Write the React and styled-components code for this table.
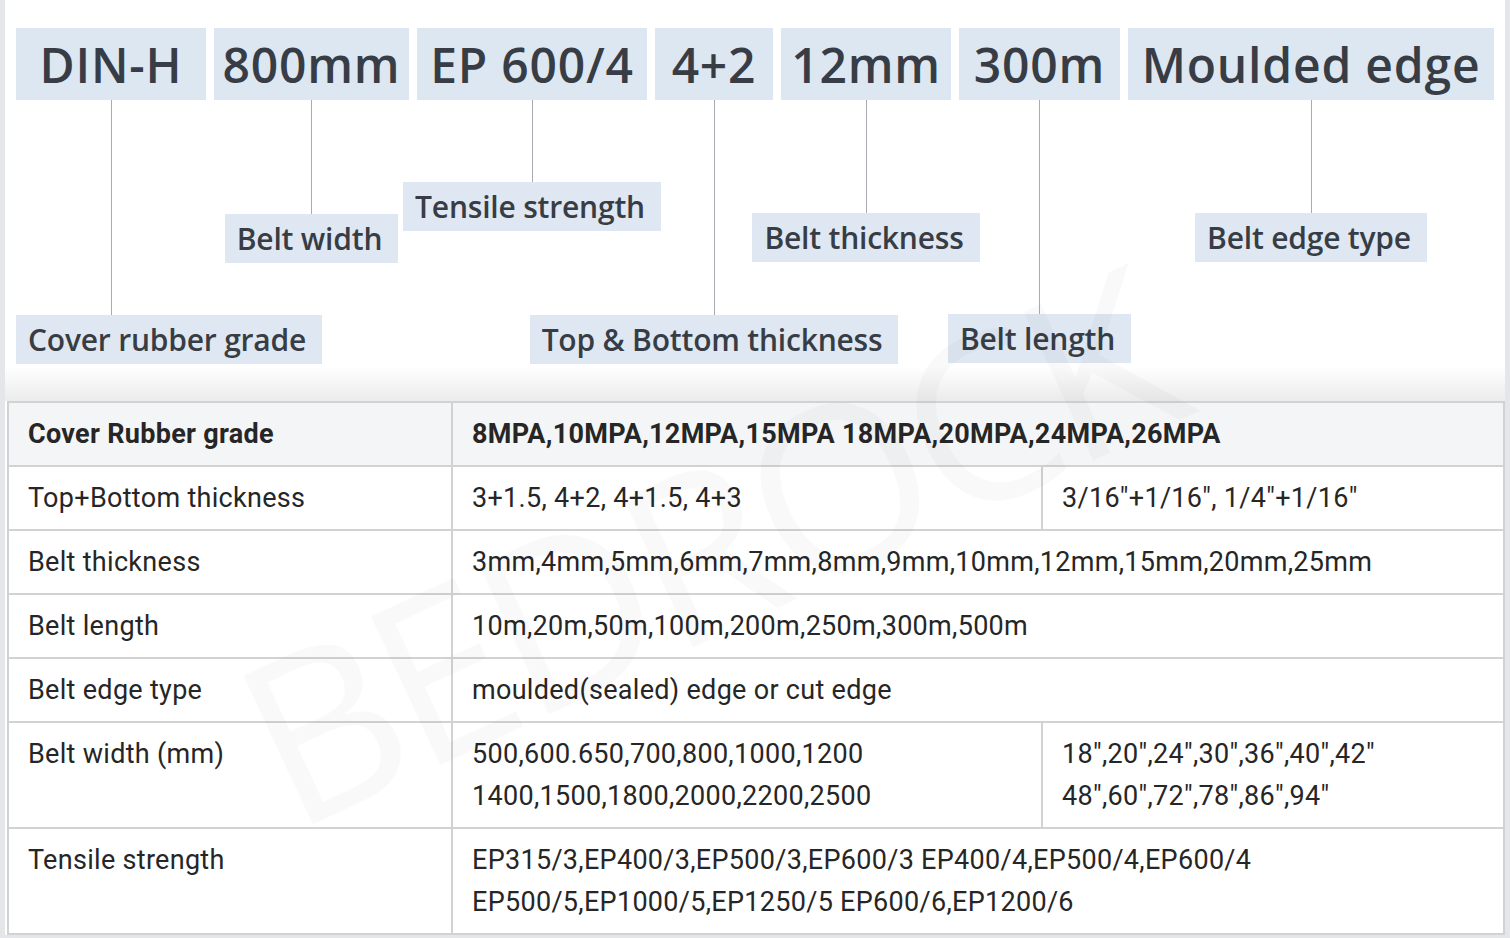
import React from "react";
import styled, { createGlobalStyle } from "styled-components";

const GlobalStyle = createGlobalStyle`
  body {
    margin: 0;
    background: #ffffff;
    font-family: "Open Sans", "Noto Sans", sans-serif;
  }
`;

const parts = [
  { code: "DIN-H", label: "Cover rubber grade", w: 190, drop: 215, start: true },
  { code: "800mm", label: "Belt width", w: 195, drop: 114 },
  { code: "EP 600/4", label: "Tensile strength", w: 230, drop: 82 },
  { code: "4+2", label: "Top & Bottom thickness", w: 118, drop: 215 },
  { code: "12mm", label: "Belt thickness", w: 170, drop: 113 },
  { code: "300m", label: "Belt length", w: 161, drop: 214 },
  { code: "Moulded edge", label: "Belt edge type", w: 366, drop: 113 },
];

const rows = [
  {
    name: "Top+Bottom thickness",
    values: ["3+1.5, 4+2, 4+1.5, 4+3", "3/16\"+1/16\", 1/4\"+1/16\""],
  },
  { name: "Belt thickness", values: ["3mm,4mm,5mm,6mm,7mm,8mm,9mm,10mm,12mm,15mm,20mm,25mm"] },
  { name: "Belt length", values: ["10m,20m,50m,100m,200m,250m,300m,500m"] },
  { name: "Belt edge type", values: ["moulded(sealed) edge or cut edge"] },
  {
    name: "Belt width (mm)",
    values: [
      ["500,600.650,700,800,1000,1200", "1400,1500,1800,2000,2200,2500"],
      ["18\",20\",24\",30\",36\",40\",42\"", "48\",60\",72\",78\",86\",94\""],
    ],
  },
  {
    name: "Tensile strength",
    values: [
      [
        "EP315/3,EP400/3,EP500/3,EP600/3 EP400/4,EP500/4,EP600/4",
        "EP500/5,EP1000/5,EP1250/5 EP600/6,EP1200/6",
      ],
    ],
  },
];

const renderValue = (value) =>
  Array.isArray(value)
    ? value.map((line, i) => (
        <React.Fragment key={i}>
          {i > 0 && <br />}
          {line}
        </React.Fragment>
      ))
    : value;

const App = () => {
  return (
    <Frame>
      <GlobalStyle />
      <Diagram>
        {parts.map((part) => (
          <Column key={part.code} $w={part.w}>
            <CodeBox>{part.code}</CodeBox>
            <Stem $drop={part.drop} />
            <Label $start={part.start}>{part.label}</Label>
          </Column>
        ))}
      </Diagram>

      <SpecTable>
        <colgroup>
          <col style={{ width: 444 }} />
          <col style={{ width: 590 }} />
          <col />
        </colgroup>
        <tbody>
          <tr>
            <Cell $head>Cover Rubber grade</Cell>
            <Cell $head colSpan={2}>
              8MPA,10MPA,12MPA,15MPA 18MPA,20MPA,24MPA,26MPA
            </Cell>
          </tr>
          {rows.map((row) => (
            <tr key={row.name}>
              <Cell>{row.name}</Cell>
              {row.values.length === 2 ? (
                <>
                  <Cell>{renderValue(row.values[0])}</Cell>
                  <Cell>{renderValue(row.values[1])}</Cell>
                </>
              ) : (
                <Cell colSpan={2}>{renderValue(row.values[0])}</Cell>
              )}
            </tr>
          ))}
        </tbody>
      </SpecTable>

      <Watermark>BEDROCK</Watermark>
    </Frame>
  );
};

const Frame = styled.div`
  position: relative;
  width: 1500px;
  height: 935px;
  overflow: hidden;
  border-left: 5px solid #e5e6e9;
  border-right: 5px solid #e5e6e9;
  border-bottom: 3px solid #e5e6e9;
  background: #ffffff;
`;

const Diagram = styled.div`
  display: flex;
  align-items: flex-start;
  gap: 8px;
  padding: 28px 0 0 11px;
  box-sizing: border-box;
  height: 401px;
  background: linear-gradient(
    to bottom,
    #ffffff 0,
    #ffffff calc(100% - 34px),
    #ebebeb 100%
  );
`;

const Column = styled.div`
  display: flex;
  flex-direction: column;
  align-items: center;
  flex: 0 0 ${(p) => p.$w}px;
  width: ${(p) => p.$w}px;
`;

const CodeBox = styled.div`
  align-self: stretch;
  height: 72px;
  display: flex;
  align-items: center;
  justify-content: center;
  background: #dde7f2;
  color: #383d45;
  font-family: "Open Sans", "Noto Sans", sans-serif;
  font-size: 48px;
  font-weight: 600;
  letter-spacing: 0.8px;
  white-space: nowrap;
`;

const Stem = styled.div`
  width: 1px;
  height: ${(p) => p.$drop}px;
  background: #a8abb0;
`;

const Label = styled.div`
  align-self: ${(p) => (p.$start ? "flex-start" : "center")};
  height: 49px;
  display: flex;
  align-items: center;
  padding: 0 16px 0 12px;
  background: #dfe8f2;
  color: #383d45;
  font-family: "Open Sans", "Noto Sans", sans-serif;
  font-size: 30px;
  font-weight: 600;
  letter-spacing: -0.2px;
  white-space: nowrap;
`;

const SpecTable = styled.table`
  width: 1498px;
  margin-left: 2px;
  border-collapse: collapse;
  table-layout: fixed;
  font-family: Roboto, "Liberation Sans", sans-serif;
  color: #262626;
`;

const Cell = styled.td`
  padding: 10px 19px;
  line-height: 42px;
  font-size: 27px;
  letter-spacing: 0.3px;
  font-weight: ${(p) => (p.$head ? 700 : 400)};
  background: ${(p) => (p.$head ? "#f4f5f7" : "transparent")};
  border: 2px solid #d2d2d2;
  vertical-align: top;
  white-space: nowrap;
`;

const Watermark = styled.div`
  position: absolute;
  left: calc(50% - 50px);
  top: calc(50% + 75px);
  transform: translate(-50%, -50%) rotate(-25deg);
  font-family: "Open Sans", sans-serif;
  font-size: 230px;
  font-weight: 400;
  letter-spacing: -8px;
  color: rgba(0, 0, 0, 0.022);
  white-space: nowrap;
  pointer-events: none;
`;

export default App;
